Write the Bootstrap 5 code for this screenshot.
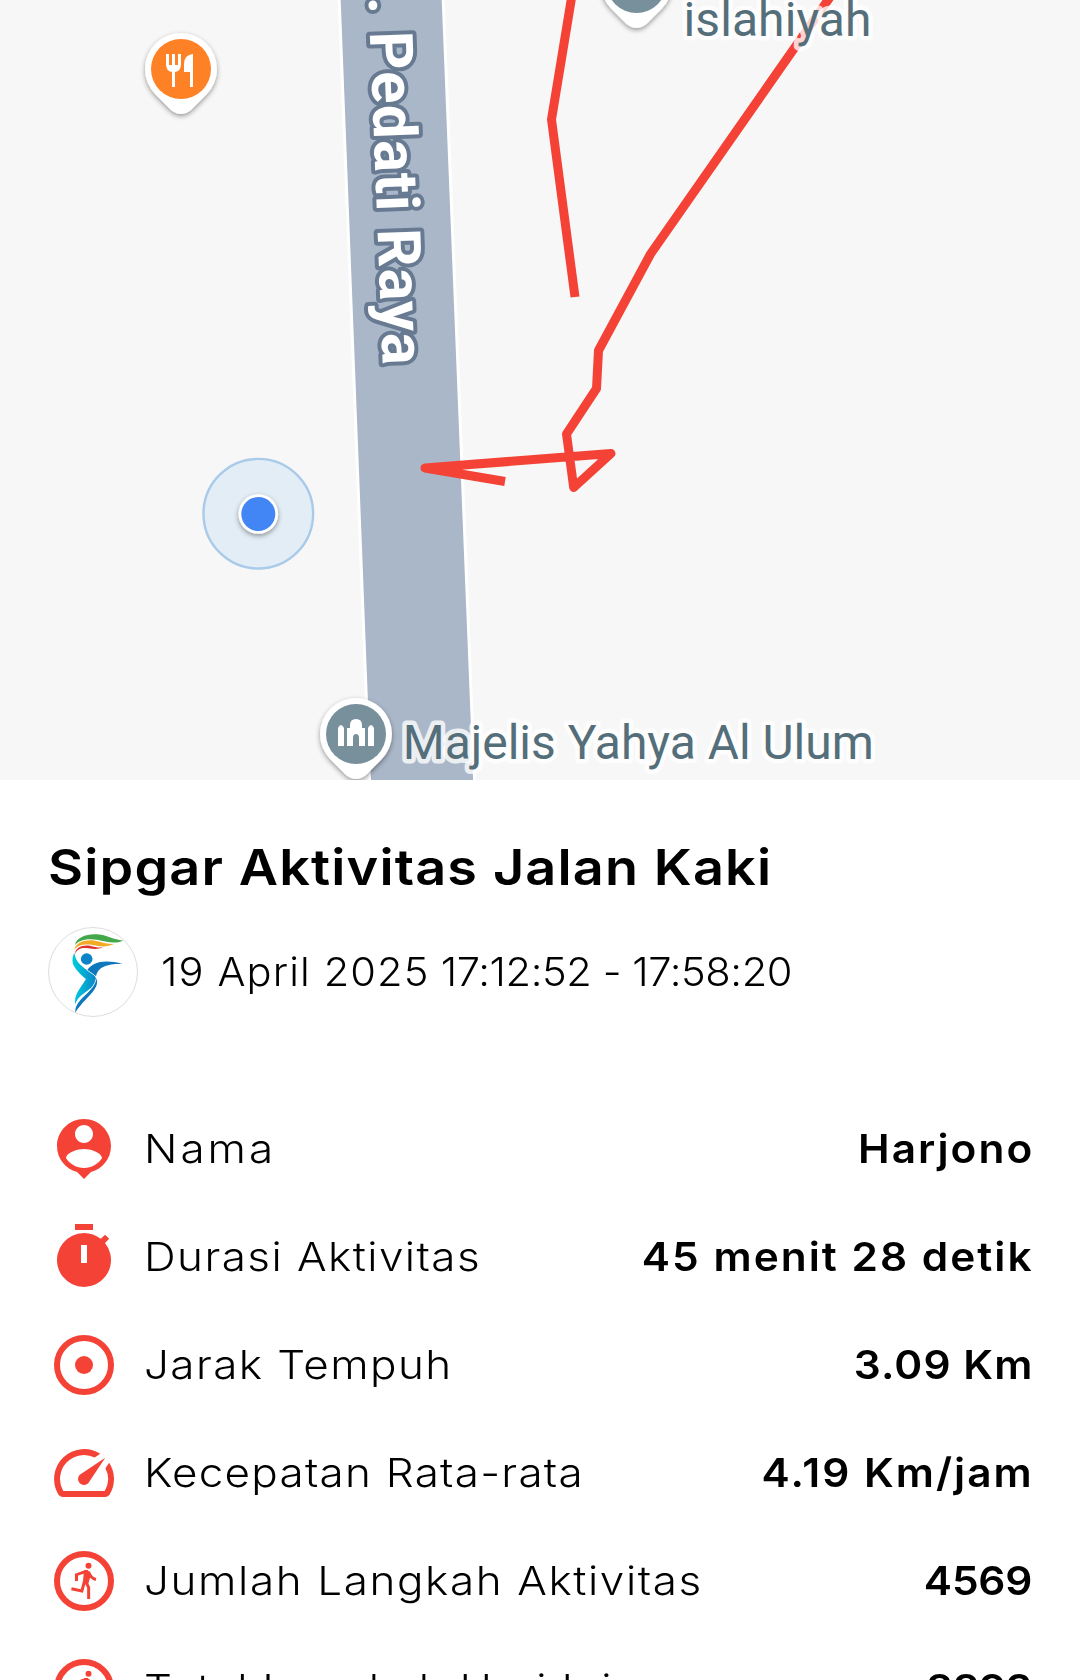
<!doctype html>
<html lang="id">
<head>
  <meta charset="utf-8">
  <title>Sipgar Aktivitas</title>
  <meta name="viewport" content="width=device-width,initial-scale=1">
  <link href="https://cdn.jsdelivr.net/npm/bootstrap@5.3.0/dist/css/bootstrap.min.css" rel="stylesheet">
  <style>
    :root {
      --accent: #f44336;
      --font-ui: Inter, "Open Sans", sans-serif;
    }
    body {
      width: 1080px;
      height: 1680px;
      font-family: var(--font-ui);
      color: #000;
      background: #fff;
    }

    /* Map */
    .map-view { display: block; width: 1080px; height: 780px; font-family: Roboto, sans-serif; }
    .poi-label {
      font-size: 48px;
      fill: #546e7a;
      stroke: rgba(255,255,255,.8);
      stroke-width: 9px;
      stroke-linejoin: round;
      paint-order: stroke;
    }
    .road-label {
      font-size: 60px;
      font-weight: 700;
      fill: #fff;
      stroke: #677a92;
      stroke-width: 8px;
      stroke-linejoin: round;
      paint-order: stroke;
    }

    /* Activity header */
    .activity { padding: 53px 48px 0; }
    .activity-title {
      font-size: 50px;
      line-height: 68px;
      font-weight: 600;
      letter-spacing: 1.06px;
      margin-bottom: 26px;
      transform: scaleX(1.08);
      transform-origin: left;
    }
    .activity-time {
      margin-left: 23px;
      font-size: 40px;
      font-weight: 300;
      letter-spacing: -.4px;
      transform: scaleX(1.04);
      transform-origin: left;
    }
    .activity-date { letter-spacing: 1.07px; }
    .app-logo { width: 90px; height: 90px; }

    /* Stats, letters are widened a little on both sides */
    .stat-list { margin-top: 78px; }
    .stat-row { height: 108px; font-size: 40px; --name-track: 1.3px; --value-track: 1.9px; }
    .stat-icon { width: 72px; height: 72px; margin-right: 24px; fill: var(--accent); }
    .stat-name {
      font-weight: 300;
      letter-spacing: var(--name-track);
      transform: scaleX(1.1);
      transform-origin: left;
    }
    .stat-value {
      font-weight: 600;
      letter-spacing: var(--value-track);
      margin-right: calc(var(--value-track) * -1);
      transform: scaleX(1.06);
      transform-origin: right;
    }
    .stat-row:nth-child(1) { --name-track: 2.7px; }
    .stat-row:nth-child(3) { --value-track: 1px; }
    .stat-row:nth-child(4) { --name-track: 1.14px; }
    .stat-row:nth-child(5) { --name-track: 1.46px; --value-track: -.2px; }
    .stat-row:nth-child(6) { --name-track: 1.14px; --value-track: -.6px; }
  </style>
</head>
<body class="overflow-hidden">
  <svg class="map-view" viewBox="0 0 1080 780">
    <defs>
      <filter id="pinShadow" x="-30%" y="-30%" width="160%" height="160%">
        <feDropShadow dx="0" dy="2" stdDeviation="2.5" flood-opacity=".4"/>
      </filter>
      <path id="pin" d="M-25.5 25.5A36 36 0 1 1 25.5 25.5L10 41Q0 49-10 41Z" fill="#fff" filter="url(#pinShadow)"/>
    </defs>
    <rect width="1080" height="780" fill="#f7f7f7"/>
    <path d="M338.8-10H442.8L475 790H369.9Z" fill="#aab7c8" stroke="#fff" stroke-width="3"/>

    <!-- Walked route -->
    <g fill="none" stroke="#f44336" stroke-width="9" stroke-linejoin="round">
      <path d="M572-5L551.5 119.5L575 297"/>
      <path d="M831.5-5L650.5 254L598.5 350.5L596.5 388.5L566.5 434L573.7 487.5L611 453.5L425 468L505 481.5"/>
    </g>
    <text class="road-label" transform="translate(368.5 -3) rotate(87.77)" textLength="368.5">. Pedati Raya</text>

    <g transform="translate(181 69)">
      <use href="#pin"/>
      <circle r="30" fill="#ff8126"/>
      <path d="M-15-15h3v11h3v-11h3v11h3v-11h3V-5q0 7-6 8v15h-3V3q-6-1-6-8zM12-15v33H9V3H3V-5q0-9 9-10z" fill="#fff"/>
    </g>
    <g transform="translate(636.5 -17)">
      <use href="#pin"/>
      <circle r="30" fill="#78909c"/>
    </g>
    <g transform="translate(356 734)">
      <use href="#pin"/>
      <circle r="30" fill="#78909c"/>
      <path d="M-18 12V-6q3-6 6 0v18zM12 12V-6q3-6 6 0v18zM-9 12V-6h3v-3q0-6 6-6t6 6v3h3v18H3V4Q3 0 0 0T-3 4v8z" fill="#fff"/>
    </g>

    <!-- Current position -->
    <circle cx="258.3" cy="513.7" r="54.8" fill="#e3edf5" stroke="#a9cbea" stroke-width="2.4"/>
    <circle cx="258.3" cy="514" r="19.8" fill="#fff" filter="url(#pinShadow)"/>
    <circle cx="258.3" cy="514" r="17" fill="#4285f4"/>

    <text class="poi-label" x="683.5" y="35.7" textLength="188">islahiyah</text>
    <text class="poi-label" x="402.8" y="758.5" textLength="471">Majelis Yahya Al Ulum</text>
  </svg>

  <main class="activity">
    <h1 class="activity-title text-nowrap">Sipgar Aktivitas Jalan Kaki</h1>
    <div class="d-flex align-items-center">
      <svg class="app-logo flex-shrink-0" viewBox="54 320 270 270">
        <defs>
          <linearGradient id="ribbon" x1="134" y1="0" x2="200" y2="0" gradientUnits="userSpaceOnUse">
            <stop offset="0" stop-color="#00c8dc"/>
            <stop offset="1" stop-color="#0a84c6"/>
          </linearGradient>
        </defs>
        <circle cx="189" cy="455" r="133.5" fill="#fff" stroke="#bbb" stroke-width="1.5"/>
        <path d="M134 375C140 350 170 340 202 342C235 345 248 358 280 361C255 371 235 366 205 359C170 352 145 360 134 375Z" fill="#43a84a"/>
        <path d="M133 388C138 366 165 357 195 361C215 365 230 371 252 371C230 381 210 379 188 374C160 370 143 375 133 388Z" fill="#f2ab27"/>
        <path d="M135 401C136 382 155 373 180 376C195 380 203 382 218 381C205 388 190 386 175 384C155 381 142 386 135 401Z" fill="#e0322c"/>
        <circle cx="170" cy="416" r="17.5" fill="#0a84c6"/>
        <path d="M172 449C188 425 222 416 278 430C240 431 205 434 198 468Z" fill="#0f78bd"/>
        <path d="M200 473C210 510 165 530 136 577C134 535 185 525 200 473Z" fill="#0f78bd"/>
        <path d="M133 397C138 425 150 433 172 450C190 463 199 468 198 476C190 515 145 515 136 553C130 525 150 505 168 476C138 450 117 430 133 397Z" fill="url(#ribbon)"/>
        <path d="M170 449C188 461 199 466 199 475C188 520 148 520 137 556" fill="none" stroke="#fff" stroke-width="2"/>
      </svg>
      <span class="activity-time text-nowrap"><span class="activity-date">19 April 2025</span> 17:12:52 - 17:58:20</span>
    </div>

    <div class="stat-list">
      <div class="stat-row d-flex align-items-center text-nowrap">
        <svg class="stat-icon" viewBox="0 0 24 24"><path d="M12 2c-4.97 0-9 4.03-9 9 0 4.17 2.84 7.67 6.69 8.69L12 22l2.31-2.31C18.16 18.67 21 15.17 21 11c0-4.97-4.03-9-9-9zm0 2c1.66 0 3 1.34 3 3s-1.34 3-3 3-3-1.34-3-3 1.34-3 3-3zm0 14.3c-2.5 0-4.71-1.28-6-3.22.03-1.99 4-3.08 6-3.08 1.99 0 5.97 1.09 6 3.08-1.29 1.94-3.5 3.22-6 3.22z"/></svg>
        <span class="stat-name">Nama</span>
        <span class="stat-value ms-auto">Harjono</span>
      </div>
      <div class="stat-row d-flex align-items-center text-nowrap">
        <svg class="stat-icon" viewBox="0 0 24 24"><path d="M9 1h6v2H9z"/><path fill-rule="evenodd" d="M12 4c2.1 0 4.05.72 5.6 1.95l1.45-1.4 1.35 1.35-1.4 1.45A9 9 0 1 1 12 4zM11 8v6h2V8z"/></svg>
        <span class="stat-name">Durasi Aktivitas</span>
        <span class="stat-value ms-auto">45 menit 28 detik</span>
      </div>
      <div class="stat-row d-flex align-items-center text-nowrap">
        <svg class="stat-icon" viewBox="0 0 24 24"><circle cx="12" cy="12" r="9" fill="none" stroke="#f44336" stroke-width="2"/><circle cx="12" cy="12" r="3"/></svg>
        <span class="stat-name">Jarak Tempuh</span>
        <span class="stat-value ms-auto">3.09 Km</span>
      </div>
      <div class="stat-row d-flex align-items-center text-nowrap">
        <svg class="stat-icon" viewBox="0 0 24 24"><path d="m20.38 8.57-1.23 1.85a8 8 0 0 1-.22 7.58H5.07A8 8 0 0 1 15.58 6.85l1.85-1.23A10 10 0 0 0 3.35 19a2 2 0 0 0 1.72 1h13.85a2 2 0 0 0 1.74-1 10 10 0 0 0-.27-10.44zm-9.79 6.84a2 2 0 0 0 2.83 0l5.66-8.49-8.49 5.66a2 2 0 0 0 0 2.83z"/></svg>
        <span class="stat-name">Kecepatan Rata-rata</span>
        <span class="stat-value ms-auto">4.19 Km/jam</span>
      </div>
      <div class="stat-row d-flex align-items-center text-nowrap">
        <svg class="stat-icon" viewBox="0 0 24 24">
          <g id="runner">
            <circle cx="12" cy="12" r="9" fill="none" stroke="#f44336" stroke-width="2"/>
            <circle cx="13.5" cy="6.9" r="1"/>
            <path d="M12 8.4l1.3-.1 1 1.6-.9 3.1-1.8-.2z"/>
            <path fill="none" stroke="#f44336" d="M9.5 12V9.9l3.4-1.2M13.5 8.9q.8 2.3 2.5 2.6M12.6 12.3l.95 1.8V18M12.1 12.3l-.8 3-3.5-.7"/>
          </g>
        </svg>
        <span class="stat-name">Jumlah Langkah Aktivitas</span>
        <span class="stat-value ms-auto">4569</span>
      </div>
      <div class="stat-row d-flex align-items-center text-nowrap">
        <svg class="stat-icon" viewBox="0 0 24 24"><use href="#runner"/></svg>
        <span class="stat-name">Total Langkah Hari Ini</span>
        <span class="stat-value ms-auto">8893</span>
      </div>
    </div>
  </main>
  <script src="https://cdn.jsdelivr.net/npm/bootstrap@5.3.0/dist/js/bootstrap.bundle.min.js"></script>
</body>
</html>
